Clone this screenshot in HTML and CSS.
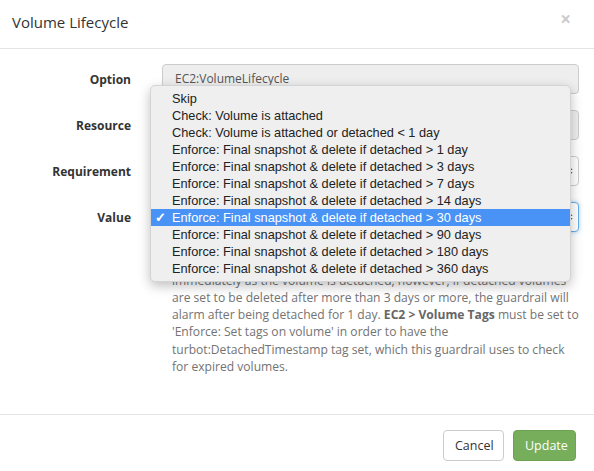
FILE: index.html
```html
<!DOCTYPE html>
<html>
<head>
<meta charset="utf-8">
<link rel="stylesheet" href="styles.css">
</head>
<body>
<div class="modal">
  <div class="modal-header">
    <h4 class="modal-title">Volume Lifecycle</h4>
    <span class="close">&times;</span>
  </div>
  <div class="modal-body">
    <div class="form-row">
      <label class="form-label">Option</label>
      <div class="control disabled">EC2:VolumeLifecycle</div>
    </div>
    <div class="form-row">
      <label class="form-label">Resource</label>
      <div class="control disabled">arn:aws:ec2</div>
    </div>
    <div class="form-row">
      <label class="form-label">Requirement</label>
      <div class="control select">Required<span class="arrows"><svg width="7" height="12" viewBox="0 0 7 12"><path d="M0.5 5 L3.5 1 L6.5 5 Z M0.5 7 L3.5 11 L6.5 7 Z" fill="#555"/></svg></span></div>
    </div>
    <div class="form-row">
      <label class="form-label">Value</label>
      <div class="control select focus">Enforce: Final snapshot &amp; delete if detached &gt; 30 days<span class="arrows"><svg width="7" height="12" viewBox="0 0 7 12"><path d="M0.5 5 L3.5 1 L6.5 5 Z M0.5 7 L3.5 11 L6.5 7 Z" fill="#555"/></svg></span></div>
    </div>
    <p class="help-block">Final snapshot &amp; delete will take a snapshot of the volume<br>before deleting it. Volumes set to 1 day will be deleted<br>immediately as the volume is detached, however, if detached volumes<br>are set to be deleted after more than 3 days or more, the guardrail will<br>alarm after being detached for 1 day. <b>EC2 &gt; Volume Tags</b> must be set to<br>'Enforce: Set tags on volume' in order to have the<br>turbot:DetachedTimestamp tag set, which this guardrail uses to check<br>for expired volumes.</p>
  </div>
  <div class="modal-footer">
    <button class="btn btn-default">Cancel</button>
    <button class="btn btn-success">Update</button>
  </div>

  <ul class="dropdown">
    <li>Skip</li>
    <li>Check: Volume is attached</li>
    <li>Check: Volume is attached or detached &lt; 1 day</li>
    <li>Enforce: Final snapshot &amp; delete if detached &gt; 1 day</li>
    <li>Enforce: Final snapshot &amp; delete if detached &gt; 3 days</li>
    <li>Enforce: Final snapshot &amp; delete if detached &gt; 7 days</li>
    <li>Enforce: Final snapshot &amp; delete if detached &gt; 14 days</li>
    <li class="selected"><span class="check">&#10003;</span>Enforce: Final snapshot &amp; delete if detached &gt; 30 days</li>
    <li>Enforce: Final snapshot &amp; delete if detached &gt; 90 days</li>
    <li>Enforce: Final snapshot &amp; delete if detached &gt; 180 days</li>
    <li>Enforce: Final snapshot &amp; delete if detached &gt; 360 days</li>
  </ul>
</div>
</body>
</html>
```

FILE: styles.css
```css
html, body {
  margin: 0;
  padding: 0;
  background: #fff;
}
body {
  font-family: "Open Sans", "Liberation Sans", sans-serif;
  font-size: 13px;
  color: #333;
}
.modal {
  position: relative;
  width: 594px;
  height: 471px;
}
.modal-header {
  box-sizing: border-box;
  height: 49px;
  padding: 10px 12px 0 12px;
  border-bottom: 1px solid #e5e5e5;
  display: flex;
  justify-content: space-between;
}
.modal-title {
  margin: 0;
  font-size: 15px;
  font-weight: 400;
  line-height: 24px;
  color: #333;
}
.close {
  font-size: 19px;
  font-weight: 700;
  line-height: 20px;
  color: #000;
  opacity: 0.2;
  margin-right: 11px;
  margin-top: -1px;
}
.modal-body {
  padding: 15px 15px 0 0;
  height: 365px;
  box-sizing: border-box;
}
.form-row {
  display: flex;
  align-items: center;
  margin-bottom: 16px;
}
.form-label {
  width: 131px;
  text-align: right;
  font-size: 12px;
  font-weight: 700;
  margin-right: 31px;
}
.control {
  box-sizing: border-box;
  position: relative;
  width: 417px;
  height: 30px;
  line-height: 28px;
  padding: 0 12px;
  border: 1px solid #ccc;
  border-radius: 4px;
  background: #fff;
  color: #555;
  font-size: 12px;
  white-space: nowrap;
  overflow: hidden;
}
.control.disabled {
  background: #eee;
}
.control.select {
  background: #fff;
}
.control.focus {
  border-color: #66afe9;
  box-shadow: 0 0 4px rgba(102, 175, 233, 0.6);
}
.arrows {
  position: absolute;
  right: 5px;
  top: 8px;
  line-height: 0;
}
.help-block {
  margin: -11px 0 0 172px;
  font-size: 12.1px;
  line-height: 17.3px;
  color: #737373;
  white-space: nowrap;
}
.help-block b {
  color: #666;
}
.modal-footer {
  border-top: 1px solid #e5e5e5;
  padding: 15px 18px 0 0;
  display: flex;
  justify-content: flex-end;
  gap: 9px;
}
.btn {
  font-family: "Open Sans", "Liberation Sans", sans-serif;
  font-size: 12.5px;
  height: 31px;
  padding: 0 11px;
  border-radius: 4px;
  border: 1px solid #ccc;
  background: #fff;
  color: #333;
  cursor: pointer;
}
.btn-default {
  width: 61px;
}
.btn-success {
  width: 63px;
  background: #76ae5b;
  border-color: #6da453;
  color: #fff;
}
.dropdown {
  position: absolute;
  left: 150px;
  top: 85px;
  width: 421px;
  box-sizing: border-box;
  margin: 0;
  padding: 4px 0;
  list-style: none;
  background: #efefef;
  border: 1px solid #d4d4d4;
  border-radius: 5px;
  box-shadow: 0 4px 12px rgba(0, 0, 0, 0.25);
  font-family: "Liberation Sans", Arial, sans-serif;
  font-size: 12.75px;
  color: #222;
}
.dropdown li {
  position: relative;
  height: 17px;
  line-height: 17px;
  padding-left: 21px;
  white-space: nowrap;
}
.dropdown li.selected {
  background: #4a93f6;
  color: #fff;
}
.check {
  position: absolute;
  left: 4px;
  top: 0;
  font-size: 13px;
  font-weight: 700;
}
```
